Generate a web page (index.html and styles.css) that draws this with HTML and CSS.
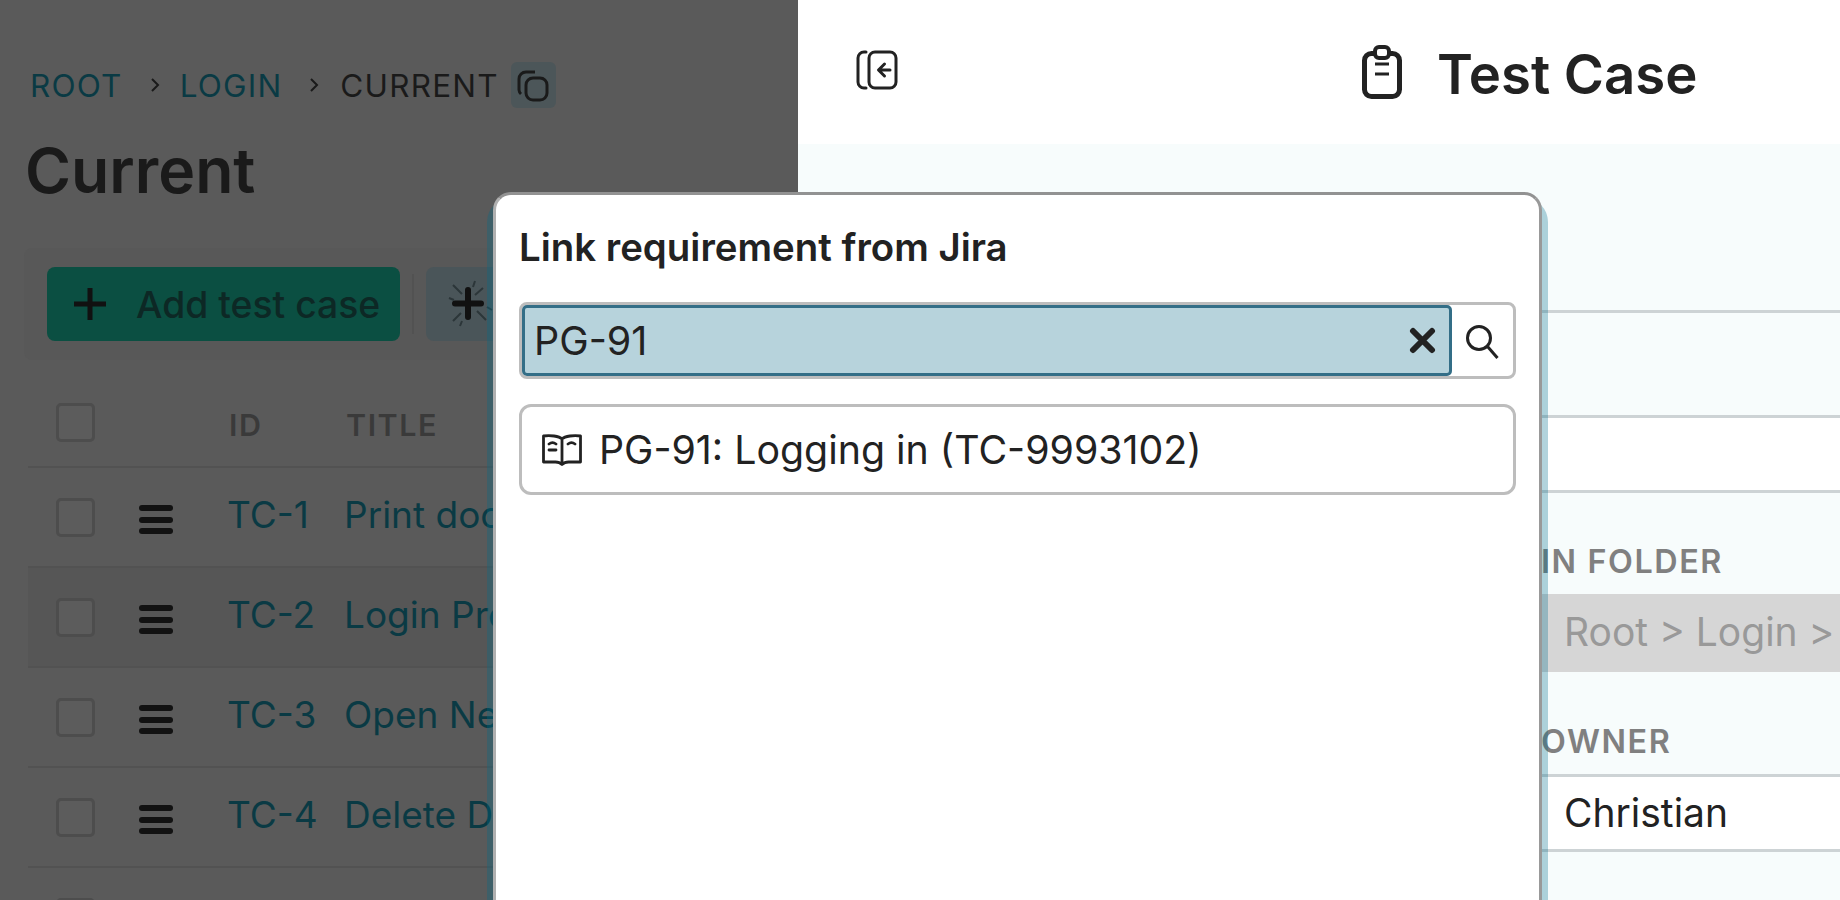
FILE: index.html
```html
<!DOCTYPE html>
<html lang="en">
<head>
<meta charset="utf-8">
<title>Test Case</title>
<link rel="stylesheet" href="styles.css">
</head>
<body>
<div class="app">
  <section class="list-pane">
    <nav class="crumbs">
      <a class="crumb link">ROOT</a>
      <svg class="chev" viewBox="0 0 12 20"><path d="M3 4l6 6-6 6"/></svg>
      <a class="crumb link">LOGIN</a>
      <svg class="chev" viewBox="0 0 12 20"><path d="M3 4l6 6-6 6"/></svg>
      <span class="crumb">CURRENT</span>
      <span class="copy-btn">
        <svg viewBox="0 0 44 46"><rect x="15" y="16" width="21" height="22" rx="7"/><path d="M24 10H15a7 7 0 0 0-7 7v11a6 6 0 0 0 2 4"/></svg>
      </span>
    </nav>
    <h1 class="page-title">Current</h1>
    <div class="toolbar">
      <button class="add-btn">
        <svg viewBox="0 0 36 36"><path d="M18 2v32M2 18h32"/></svg>
        <span>Add test case</span>
      </button>
      <span class="tool-sep"></span>
      <button class="ai-btn">
        <svg viewBox="0 0 50 50"><path class="bold" d="M25 11v27M12 24.500h26"/><path d="M10 6l9 9M40 9l-8 7M6 19l5 2M32 2l-2 6M10 42l8-8M34 32l9 9M17 47l2-5M44 28l5 3"/></svg>
      </button>
    </div>
    <div class="table">
      <div class="thead">
        <span class="check"></span>
        <span class="th id">ID</span>
        <span class="th">TITLE</span>
      </div>
      <div class="row"><span class="check"></span><span class="grip"><i></i><i></i><i></i></span><span class="id link">TC-1</span><span class="link">Print document</span></div>
      <div class="row hover"><span class="check"></span><span class="grip"><i></i><i></i><i></i></span><span class="id link">TC-2</span><span class="link">Login Process</span></div>
      <div class="row"><span class="check"></span><span class="grip"><i></i><i></i><i></i></span><span class="id link">TC-3</span><span class="link">Open New Tab</span></div>
      <div class="row"><span class="check"></span><span class="grip"><i></i><i></i><i></i></span><span class="id link">TC-4</span><span class="link">Delete Document</span></div>
      <div class="row"><span class="check"></span></div>
    </div>
  </section>

  <section class="detail-pane">
    <header class="detail-head">
      <svg class="back-icon" viewBox="0 0 42 40"><rect x="13" y="2" width="27" height="36" rx="6"/><path d="M10 2H8a6 6 0 0 0-6 6v24a6 6 0 0 0 6 6h2M34 20H23M28.500 14l-6 6 6 6"/></svg>
      <div class="detail-title">
        <svg class="clip-icon" viewBox="0 0 40 54"><rect class="board" x="2.500" y="8.500" width="35" height="43" rx="7"/><rect class="knob" x="13" y="2" width="14" height="11" rx="4"/><path class="mark" d="M13 19h14M13 29h14"/></svg>
        <h2>Test Case</h2>
      </div>
    </header>
    <div class="detail-body">
      <div class="field-top"></div>
      <div class="field-input"></div>
      <label class="field-label folder">IN FOLDER</label>
      <div class="field-disabled">Root &gt; Login &gt;</div>
      <label class="field-label owner">OWNER</label>
      <div class="field-input owner-input">Christian</div>
    </div>
  </section>

  <div class="modal">
    <h3>Link requirement from Jira</h3>
    <div class="search">
      <div class="search-input">
        <span>PG-91</span>
        <svg viewBox="0 0 27 27"><path d="M4 4l19 19M23 4L4 23"/></svg>
      </div>
      <svg class="search-icon" viewBox="0 0 34 36"><circle cx="14" cy="14" r="11.500"/><path d="M22.500 22.500l10 11.500"/></svg>
    </div>
    <div class="result">
      <svg viewBox="0 0 40 32"><path d="M20 5C17 2 8 1 1.500 2v26h12c3 0 5 1 6.500 2.500 1.500-1.500 3.500-2.500 6.500-2.500h12V2C32 1 23 2 20 5zM20 5v25M7 10c2-1.500 5-1.500 7 0M7 16h7M26 10c2-1.500 5-1.500 7 0"/></svg>
      <span>PG-91: Logging in (TC-9993102)</span>
    </div>
  </div>
</div>
</body>
</html>
```

FILE: styles.css
```css
* { box-sizing: border-box; }
html, body { margin: 0; height: 100%; overflow: hidden; }
body { font-family: Inter, "Liberation Sans", sans-serif; color: #222; background: #fff; }

.app { position: relative; display: flex; width: 1840px; height: 900px; overflow: hidden; }

/* Dimmed list pane */
.list-pane { width: 798px; flex: none; background: #5a5a5a; padding: 62px 0 0 24px; color: #1a1a1a; }
.link { color: #0a3a44; }

.crumbs { display: flex; align-items: center; height: 46px; padding-left: 6px; font-size: 31.500px; letter-spacing: 1.200px; }
.crumb { display: block; line-height: 46px; padding-top: 2px; }
.chev { width: 12px; height: 20px; margin: 0 19px 0 26px; flex: none; fill: none; stroke: #1a1a1a; stroke-width: 2; }
.crumb + .chev + .crumb + .chev { margin-right: 20px; margin-left: 26px; }
.copy-btn { display: flex; width: 45px; height: 46px; margin-left: 12px; background: #4c5659; border-radius: 6px; }
.copy-btn svg { width: 44px; height: 46px; fill: none; stroke: #1a1a1a; stroke-width: 3; }

.page-title { margin: 26px 0 0 1px; font-size: 62.500px; line-height: 72px; font-weight: 600; color: #1a1a1a; }

.toolbar { display: flex; align-items: center; height: 112px; margin-top: 42px; padding-left: 23px; background: #585858; border-radius: 8px; }
.add-btn { display: flex; align-items: center; gap: 28px; width: 353px; height: 74px; padding: 0 0 0 25px; border: 0; border-radius: 8px; background: #0b4f42; color: #0d2825; font: 500 37.300px Inter, sans-serif; }
.add-btn svg { width: 36px; height: 36px; flex: none; fill: none; stroke: #111; stroke-width: 5; }
.tool-sep { width: 2px; height: 60px; margin: 0 12px 0 12px; background: #525252; }
.ai-btn { display: flex; align-items: center; justify-content: center; width: 84px; height: 74px; padding: 0; border: 0; border-radius: 8px; background: #4a5559; }
.ai-btn svg { width: 50px; height: 50px; flex: none; fill: none; stroke: #2c3639; stroke-width: 2; }
.ai-btn svg .bold { stroke: #111; stroke-width: 6; stroke-linecap: round; }

.table { padding-left: 4px; }
.thead, .row { display: flex; align-items: center; }
.thead { height: 106px; padding: 18px 0 0 28px; }
.th { margin-top: 4px; font-size: 30.500px; font-weight: 600; letter-spacing: 1.500px; color: #3a3a3a; }
.thead .id { width: 117px; margin-left: 134px; }
.row { height: 100px; border-top: 2px solid #525252; padding-left: 28px; font-size: 37px; }
.row.hover { background: #565656; }
.check { display: block; flex: none; width: 39px; height: 39px; border: 3px solid #4d4d4d; border-radius: 5px; background: #5c5c5c; }
.grip { display: flex; flex-direction: column; justify-content: space-between; width: 34px; height: 29px; margin-left: 44px; margin-top: 5px; flex: none; }
.grip i { display: block; height: 6px; border-radius: 3px; background: #121212; }
.row .id { width: 117px; margin-left: 54px; margin-top: -6px; flex: none; }
.row .id + .link { margin-top: -6px; white-space: nowrap; }

/* Detail pane */
.detail-pane { flex: 1; min-width: 0; background: #f7fcfc; }
.detail-head { display: flex; align-items: center; height: 144px; padding-left: 58px; background: #fff; }
.back-icon { width: 42px; height: 40px; margin-top: -4px; flex: none; fill: none; stroke: #222; stroke-width: 3; stroke-linecap: round; stroke-linejoin: round; }
.detail-title { display: flex; align-items: center; gap: 35px; margin-left: 464px; }
.clip-icon { width: 40px; height: 54px; flex: none; fill: none; stroke: #222; }
.clip-icon .board { stroke-width: 5; }
.clip-icon .knob { stroke-width: 4; fill: #fff; }
.clip-icon .mark { stroke-width: 3; }
.detail-title h2 { margin: 3px 0 0; font-size: 54.500px; line-height: 60px; font-weight: 600; }

.detail-body { padding: 166px 0 0 743px; }
.field-top { height: 105px; border-top: 3px solid #cdd3d5; }
.field-input { height: 78px; padding-left: 23px; background: #fff; border-top: 3px solid #cdd3d5; border-bottom: 3px solid #cdd3d5; font-size: 39px; line-height: 72px; color: #222; }
.field-label { display: block; font-size: 32.300px; line-height: 36px; font-weight: 600; letter-spacing: 1.600px; color: #808080; }
.field-label.folder { margin-top: 51px; }
.field-disabled { height: 78px; margin-top: 14px; padding-left: 23px; background: #d6d6d6; font-size: 39px; line-height: 76px; color: #999; white-space: nowrap; }
.field-label.owner { margin-top: 52px; }
.owner-input { margin-top: 14px; }

/* Modal */
.modal { position: absolute; left: 493px; top: 192px; width: 1049px; height: 760px; padding: 29px 23px 0; background: #fff; border: 3px solid; border-color: #929292 #999 #999 #b0b0b0; border-radius: 18px; box-shadow: 0 12px 0 6px rgba(0, 110, 140, .3); }
.modal h3 { margin: 0; font-size: 38.400px; line-height: 46px; font-weight: 600; color: #222; }
.search { display: flex; align-items: center; height: 77px; margin-top: 32px; background: #fff; border: 3px solid #bdbdbd; border-radius: 8px; }
.search-input { display: flex; align-items: center; justify-content: space-between; width: 930px; height: 71px; padding: 0 13px 0 9px; background: #b7d3dc; border: 3px solid #336e87; border-radius: 5px; font-size: 39.500px; flex: none; }
.search-input svg { width: 27px; height: 27px; fill: none; stroke: #222; stroke-width: 6; stroke-linecap: round; }
.search-icon { width: 34px; height: 36px; margin-left: 13px; margin-top: 2px; fill: none; stroke: #222; stroke-width: 3; flex: none; }
.result { display: flex; align-items: center; gap: 17px; height: 91px; margin-top: 25px; padding-left: 20px; border: 3px solid #bdbdbd; border-radius: 12px; font-size: 39.300px; }
.result svg { width: 40px; height: 32px; flex: none; fill: none; stroke: #222; stroke-width: 2.800; stroke-linejoin: round; stroke-linecap: round; }
```
